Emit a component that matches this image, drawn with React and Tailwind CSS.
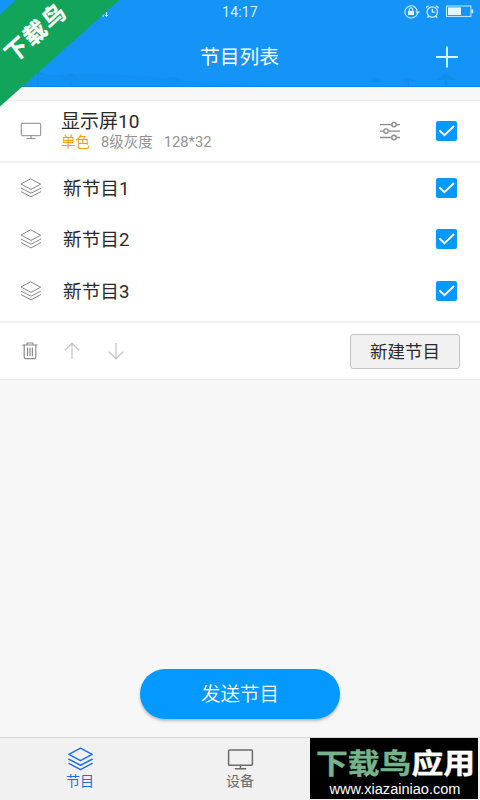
import React, { useState } from 'react';

const LayersIcon = ({ className, strokeWidth = 1 }) => (
  <svg viewBox="0 0 22 20" fill="none" stroke="currentColor" strokeWidth={strokeWidth} strokeLinejoin="round" strokeLinecap="round" className={className}>
    <path d="M11 1 L20.7 6.2 L11 11.4 L1.3 6.2 Z" />
    <path d="M1.3 10.2 L11 15.2 L20.7 10.2" />
    <path d="M1.3 13.7 L11 18.9 L20.7 13.7" />
  </svg>
);

const MonitorIcon = ({ className, strokeWidth = 1 }) => (
  <svg viewBox="0 0 22 18" fill="none" stroke="currentColor" strokeWidth={strokeWidth} strokeLinecap="round" className={className}>
    <rect x="1.3" y="1.3" width="19.4" height="12.4" rx="0.8" />
    <path d="M11 13.7 V16.5 M6.8 16.6 H15.2" />
  </svg>
);

const SlidersIcon = () => (
  <svg viewBox="0 0 22 20" fill="none" stroke="#8c8c8c" strokeWidth="1.4" className="h-5 w-[22px]">
    <path d="M1 3.6 H12.7 M17.3 3.6 H21 M1 10.1 H4.7 M9.3 10.1 H21 M1 16.5 H12.7 M17.3 16.5 H21" />
    <circle cx="15" cy="3.6" r="2.2" />
    <circle cx="7" cy="10.1" r="2.2" />
    <circle cx="15" cy="16.5" r="2.2" />
  </svg>
);

const TrashIcon = () => (
  <svg viewBox="0 0 16 18" fill="none" stroke="#8c8c8c" strokeWidth="1.2" strokeLinecap="round" strokeLinejoin="round" className="h-[18px] w-4">
    <path d="M0.9 3 H15.1 M5 2.8 V1 H11 V2.8" />
    <path d="M2.2 3.2 V15 Q2.2 16.6 3.8 16.6 H12.2 Q13.8 16.6 13.8 15 V3.2" />
    <path d="M5.6 6 V13.6 M8 6 V13.6 M10.4 6 V13.6" />
  </svg>
);

const ArrowIcon = ({ className = '' }) => (
  <svg viewBox="0 0 16 18" fill="none" stroke="#c6c6c6" strokeWidth="1.2" className={`h-[18px] w-4 ${className}`}>
    <path d="M8 17 V1.2 M0.8 8.2 L8 1.2 L15.2 8.2" />
  </svg>
);

const Checkbox = ({ checked, onChange }) => (
  <button
    onClick={onChange}
    className={`flex h-5 w-[21px] items-center justify-center rounded-[2px] ${checked ? 'bg-[#0499ff]' : 'border border-[#c6c6c6] bg-white'}`}
  >
    {checked && (
      <svg viewBox="0 0 21 20" fill="none" stroke="#fff" strokeWidth="2" className="h-5 w-[21px]">
        <path d="M3.4 9.4 L8.4 14.2 L18 5" />
      </svg>
    )}
  </button>
);

const StatusIcons = () => (
  <svg viewBox="0 0 72 16" fill="none" stroke="#c9ecff" strokeWidth="1.1" className="h-4 w-[72px]">
    {/* Rotation lock */}
    <path d="M10.4 13 A6.1 6.1 0 1 1 13.1 7.6" />
    <path d="M9.6 13.4 Q12.6 12.4 13.4 9.6" />
    <path d="M11.2 7.4 H16 L13.6 10.2 Z" fill="#c9ecff" stroke="none" />
    <rect x="4" y="6.8" width="6" height="4.2" fill="#e6f6ff" stroke="none" />
    <path d="M5.3 7 V5.4 Q5.3 3.9 7 3.9 Q8.7 3.9 8.7 5.4 V7" />
    {/* Alarm */}
    <circle cx="28.3" cy="8" r="5.2" strokeWidth="1.3" />
    <path d="M28.3 4.8 V8.2 H31.2 M22.2 4.2 Q22.6 2.2 24.8 1.9 M34.4 4.2 Q34 2.2 31.8 1.9 M24.8 12 L23.4 13.6 M31.8 12 L33.2 13.6" strokeWidth="1.3" />
    {/* Battery */}
    <rect x="42.5" y="2" width="24.4" height="10.4" strokeWidth="1" />
    <rect x="44" y="3.4" width="13" height="7.6" fill="#e6f6ff" stroke="none" />
    <rect x="67.4" y="5.4" width="1.8" height="3.8" fill="#c9ecff" stroke="none" />
  </svg>
);

const Ribbon = () => (
  <div className="absolute left-0 top-0">
    <svg viewBox="0 0 120 107" className="h-[107px] w-[120px]">
      <path d="M16 0 H119.5 L0 106.5 V14.5 Z" fill="#13a45b" />
      <text
        transform="translate(13 64) rotate(-42) skewX(-4)"
        fill="#fff"
        fontSize="23"
        fontWeight="700"
        stroke="#fff"
        strokeWidth="0.4"
        letterSpacing="2"
        fontFamily="Noto Sans CJK SC, sans-serif"
      >
        下载鸟
      </text>
    </svg>
  </div>
);

const Watermark = () => (
  <div className="absolute bottom-px right-0.5 h-[61px] w-[168px] bg-black">
    <svg viewBox="0 0 168 61" className="h-[61px] w-[168px]">
      <text x="6" y="36" fontSize="28" fontWeight="700" textLength="159" lengthAdjust="spacingAndGlyphs" fontFamily="Noto Sans CJK SC, sans-serif">
        <tspan fill="#76b58b" stroke="#76b58b" strokeWidth="0.4">下载鸟</tspan>
        <tspan fill="#fff" stroke="#fff" strokeWidth="0.4">应用</tspan>
      </text>
      <text x="19.5" y="56" fontSize="14" fill="#fff" textLength="131" lengthAdjust="spacingAndGlyphs" fontFamily="Liberation Sans, sans-serif">
        www.xiazainiao.com
      </text>
    </svg>
  </div>
);

const programs = ['新节目1', '新节目2', '新节目3'];

const App = () => {
  const [screenOn, setScreenOn] = useState(true);
  const [selected, setSelected] = useState([true, true, true]);

  const toggle = (index) => {
    setSelected(selected.map((item, i) => (i === index ? !item : item)));
  };

  return (
    <div className="relative flex h-[800px] w-[480px] flex-col overflow-hidden bg-[#f7f7f7] font-['Roboto','Noto_Sans_CJK_SC',sans-serif] text-[#2b2b2b]">
      {/* Header */}
      <header className="relative flex h-[87px] shrink-0 flex-col border-b border-[#0e84e0] bg-[#1494f7] text-white">
        <svg viewBox="0 0 480 86" className="absolute inset-0 h-[86px] w-[480px]">
          <path d="M20 86 V78 Q90 70 160 78 T300 86 Z" fill="#1391f3" />
          <path d="M30 75 L38 71 L46 75 L39 75 V86 H37 V75 Z M60 81 L71 73 L82 81 L72 80 V86 H70 V80 Z M164 81 Q173 73 182 81 Z" fill="#128ded" />
          <path d="M370 82 Q376 76 382 82 Z M401 81 Q408 74 417 81 L409 81 V86 H408 V81 Z M436 80 L446 73 L456 80 L447 80 V86 H445 V80 Z" fill="#128ded" />
        </svg>
        <div className="relative grid h-6 grid-cols-3 items-center">
          <svg viewBox="0 0 8 6" fill="none" stroke="#c9ecff" strokeWidth="1" className="ml-[101px] mt-1.5 h-1.5 w-2">
            <path d="M2 5 V2 M5.5 0 V4 M3.8 2.8 L5.5 4.6 L7.2 2.8" />
          </svg>
          <span className="text-center text-[14px] tracking-[0.2px] text-[#d5f0ff]">14:17</span>
          <span className="flex justify-end pr-1">
            <StatusIcons />
          </span>
        </div>
        <div className="relative flex h-[62px] items-center pl-[200px] pr-[22px] pt-1">
          <h1 className="flex-1 pt-0.5 text-[19.8px] leading-none">节目列表</h1>
          <svg viewBox="0 0 22 22" stroke="#e0f8ff" strokeWidth="1.8" className="h-[22px] w-[22px]">
            <path d="M0 11 H22 M11 0.5 V21.5" />
          </svg>
        </div>
      </header>

      {/* Screen and its programs */}
      <main className="mt-[13px] shrink-0 border-y border-[#ebebeb] bg-white">
        <div className="flex h-[62px] items-center border-b-2 border-[#f1f1f1] pl-5 pr-[23px]">
          <MonitorIcon className="h-[18px] w-[22px] text-[#888888]" />
          <div className="ml-[19px] flex-1 pt-[3px]">
            <div className="text-[19px] leading-5">显示屏10</div>
            <div className="flex items-baseline gap-[11px] text-[14.5px] leading-5 text-[#929292]">
              <span className="text-[#ff9f0f]">单色</span>
              <span>8级灰度</span>
              <span className="text-[14.8px]">128*32</span>
            </div>
          </div>
          <SlidersIcon />
          <div className="ml-[35px]">
            <Checkbox checked={screenOn} onChange={() => setScreenOn(!screenOn)} />
          </div>
        </div>

        <ul className="h-[160px] border-b-2 border-[#f1f1f1]">
          {programs.map((name, index) => (
            <li key={name} className="flex h-[51.3px] items-center pb-px pl-5 pr-[23px]">
              <LayersIcon className="h-5 w-[22px] text-[#888888]" />
              <span className="ml-[21px] flex-1 pt-0.5 text-[18.7px] leading-6">{name}</span>
              <Checkbox checked={selected[index]} onChange={() => toggle(index)} />
            </li>
          ))}
        </ul>

        <div className="flex h-14 items-center pl-[22px] pr-5">
          <TrashIcon />
          <ArrowIcon className="ml-[26px]" />
          <ArrowIcon className="ml-7 rotate-180" />
          <button className="ml-auto h-[35px] w-[110px] rounded-[3px] border border-[#c3c3c3] bg-[#f1f1f1] pt-1 text-[17.5px] leading-none">
            新建节目
          </button>
        </div>
      </main>

      <div className="flex flex-1 items-end justify-center pb-[18px]">
        <button className="h-[50px] w-[200px] rounded-full bg-[#0499ff] pt-px text-[19.5px] leading-none font-[350] text-white shadow-[0_2px_3px_rgba(0,0,0,0.25)]">
          发送节目
        </button>
      </div>

      {/* Tab bar */}
      <nav className="grid h-[63px] shrink-0 grid-cols-3 border-t border-[#d6d6d6] bg-[#f1f1f1] text-[14px]">
        <button className="flex flex-col items-center pt-[9px] text-[#1c6fe8]">
          <LayersIcon className="h-6 w-[27px]" strokeWidth={1.2} />
          <span className="leading-5">节目</span>
        </button>
        <button className="flex flex-col items-center pt-[10px] text-[#6a6a6a]">
          <MonitorIcon className="h-[23px] w-[27px]" strokeWidth={1.2} />
          <span className="leading-5">设备</span>
        </button>
      </nav>

      <Ribbon />
      <Watermark />
    </div>
  );
};

export default App;
